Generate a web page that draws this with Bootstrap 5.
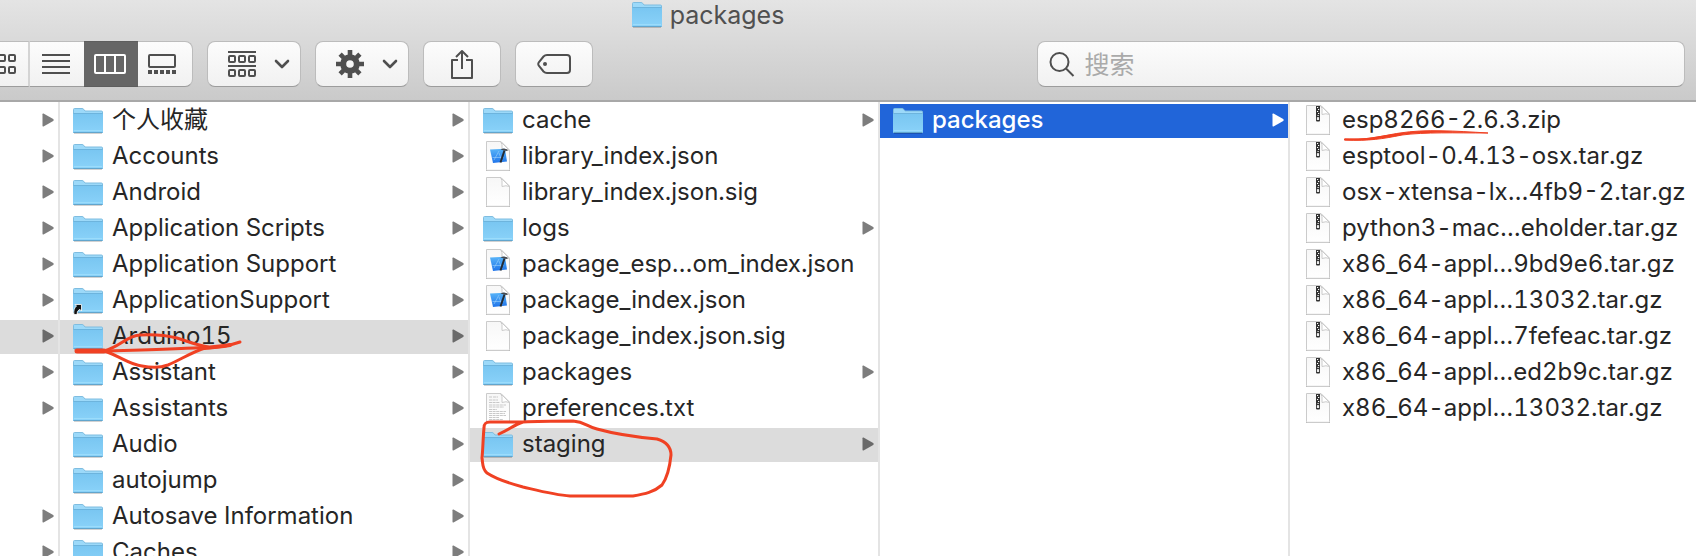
<!DOCTYPE html>
<html lang="zh-CN">
<head>
<meta charset="utf-8">
<meta name="viewport" content="width=device-width, initial-scale=1">
<title>packages</title>
<link href="https://cdn.jsdelivr.net/npm/bootstrap@5.3.0/dist/css/bootstrap.min.css" rel="stylesheet">
<style>
body{font-family:Inter,"Noto Sans CJK SC",sans-serif;font-size:24px;line-height:34px;color:#262626;background:#fff;font-variant-numeric:tabular-nums}
.finder{height:100vh}
.topbar{background:linear-gradient(#e4e4e4,#cacaca);border-bottom:2px solid #a8a8a8}
.title{height:28px;line-height:30px;font-size:25px;color:#505050;padding-right:280px;margin-bottom:13px}
.tools{gap:14px;padding:0 11px 13px 0}
.tool,.seg,.search{background:linear-gradient(#fcfcfc,#f1f1f1);border:1px solid #bcbcbc;border-bottom-color:#9c9c9c;height:46px;color:#4f4f4f}
.tool{border-radius:8px;width:78px;padding:0}
.tool.wide{width:94px;gap:18px;padding-left:10px}
.seg{border-width:1px 0;border-radius:0;width:54px;padding:0 2px 0 0}
.seg.first{width:30px;border-right:2px solid #d4d4d4}
.seg.last{border-right-width:1px;border-radius:0 8px 8px 0;width:55px;padding-right:6px}
.seg.active{background:#666;border-color:#5e5e5e;color:#fff}
.search{border-radius:8px;flex:0 0 calc(50% - 194px);padding-left:11px;gap:10px}
.search input{font-size:25px;height:40px;padding:2px 0 0;outline:0;min-width:0}
.search input::placeholder{color:#aaa;opacity:1}
.columns{display:grid;grid-template-columns:60px repeat(3,minmax(0,410fr)) minmax(0,406fr);min-height:0}
.pane{border-right:2px solid #e4e4e4;padding:2px 0 0;margin:0;min-width:0}
.pane:last-child{border-right:0}
.entry{height:34px;margin-bottom:2px;padding:0 4px 2px 13px;gap:9px;color:inherit;text-decoration:none;white-space:nowrap}
.entry .arrow{margin-left:auto;color:#7d7d7d}
.entry.trail{background:#dcdcdc}
.entry.trail .arrow{color:#6a6a6a}
.entry.picked{background:#2165d9;color:#fff;font-weight:500}
.entry.picked .arrow{color:#fff}
.ink{position:absolute;left:0;top:0;overflow:visible;pointer-events:none;z-index:2;fill:none;stroke:#f04123;stroke-width:4;stroke-linecap:round;stroke-linejoin:round}
svg{flex:none}
</style>
</head>
<body>
<svg class="position-absolute" width="0" height="0" aria-hidden="true">
<defs>
<linearGradient id="blue" x1="0" y1="0" x2="0" y2="1"><stop offset="0" stop-color="#79c6f1"/><stop offset="1" stop-color="#8ad2f9"/></linearGradient>
<linearGradient id="paper" x1="0" y1="0" x2="0" y2="1"><stop offset="0" stop-color="#f7f7f7"/><stop offset="1" stop-color="#fff"/></linearGradient>
<linearGradient id="xc" x1="0" y1="0" x2="0" y2="1"><stop offset="0" stop-color="#58b4f8"/><stop offset="1" stop-color="#1f74ea"/></linearGradient>
</defs>
<symbol id="folder" viewBox="0 0 30 30"><path d="M1 28.5h28" stroke="#000" stroke-opacity=".18"/><path d="M.5 8V4.500q0-1 1-1H9q1 0 1.700.8L12 6h16.500q1 0 1 1v20.500H.5z" fill="#9cd9f9" stroke="#7fbde0"/><path d="M0 8.500h30v18.700q0 .8-.8.800H.800q-.8 0-.8-.8z" fill="url(#blue)"/><path d="M.5 8.500h29" stroke="#6db4dd"/><path d="M.5 27.500h29" stroke="#62a5cc"/><path d="M1 25.500h28" stroke="#9bdcfb"/></symbol>
<symbol id="page" viewBox="0 0 30 30"><path d="M3 29.500h24" stroke="#000" stroke-opacity=".28"/><path d="M3.500.5h14.500L26.500 9v19.500q0 .8-.8.800H4.300q-.8 0-.8-.8z" fill="url(#paper)" stroke="#cbcbcb"/><path d="M17.500.5l1.500 3v6q4-1.500 7.500 0z" fill="#fff" stroke="#cbcbcb" stroke-linejoin="round"/></symbol>
<symbol id="json" viewBox="0 0 30 30"><use href="#page"/><path d="M7 8.500l15-.7L24 20.500l-14 1.500z" fill="url(#xc)"/><path d="M11 19l5-9M16 12l3 8M9.500 16.500h11" stroke="#9bd0fb" stroke-opacity=".6" fill="none"/><path d="M21.500 9.500L17.500 21.500" stroke="#252a31" stroke-width="2"/><path d="M17.500 8.700q3-2 5.500-.7l1.500.5v1.500l-2.500-.2-1.500-.6z" fill="#45494f"/></symbol>
<symbol id="zip" viewBox="0 0 30 30"><use href="#page"/><path d="M13 1h4v14.500q0 1-1 1h-2q-1 0-1-1z" fill="#333"/><path d="M14 2.500h1.200M15 4.500h1.200M14 6.500h1.200M15 8.500h1.200M14.500 10.500h1.200M14.400 15v-2.500h1.200V15" stroke="#fff" stroke-width="1" fill="none"/></symbol>
<symbol id="txt" viewBox="0 0 30 30"><use href="#page"/><path d="M6 4h3m1 0h5M6 7h9M6 9.500h11M6 12h17M6 14h15M6 16.500h8M6 18.500h17M6 20.500h16M6 22.500h17M6 24.500h10M6 26.500h14" stroke="#bbb" stroke-width=".8" stroke-dasharray="3 .6"/></symbol>
<symbol id="alias" viewBox="0 0 30 30"><use href="#folder"/><path d="M1 29.500q-1-5.500 2.500-8.500l-1.500-1.500h6.500v6.500l-1.800-1.800q-3 1.800-2.700 5.300z" fill="#111" stroke="#fff" stroke-width=".8"/></symbol>
<symbol id="tri" viewBox="0 0 12 14"><path d="M.5 1.200Q.5.200 1.500.6l9.700 5.500q1 .9 0 1.800L1.500 13.400q-1 .4-1-.6z" fill="currentColor"/></symbol>
<symbol id="chev" viewBox="0 0 16 10"><path d="M2 2l6 6 6-6" fill="none" stroke="currentColor" stroke-width="2.600" stroke-linecap="round" stroke-linejoin="round"/></symbol>
</svg>

<div class="finder d-flex flex-column overflow-hidden">
<header class="topbar">
<div class="title d-flex justify-content-center gap-2"><svg width="30" height="28"><use href="#folder" y="-1" width="30" height="30"/></svg><span>packages</span></div>
<div class="tools d-flex">
<div class="d-flex" role="group" aria-label="View">
<button class="btn seg first d-flex align-items-center" aria-label="Icons"><svg width="16" height="20" fill="none" stroke="currentColor" stroke-width="2"><rect x="-1" y="1" width="6" height="6" rx="1"/><rect x="9" y="1" width="6" height="6" rx="1"/><rect x="-1" y="13" width="6" height="6" rx="1"/><rect x="9" y="13" width="6" height="6" rx="1"/></svg></button>
<button class="btn seg d-flex align-items-center justify-content-center" aria-label="List"><svg width="28" height="20" stroke="currentColor" stroke-width="2"><path d="M0 1h28M0 7h28M0 13h28M0 19h28"/></svg></button>
<button class="btn seg active d-flex align-items-center justify-content-center" aria-label="Columns"><svg width="32" height="20" fill="none" stroke="currentColor" stroke-width="2"><rect x="1" y="1" width="30" height="18" rx="1"/><path d="M11 1v18M21 1v18"/></svg></button>
<button class="btn seg last d-flex align-items-center justify-content-center" aria-label="Gallery"><svg width="28" height="20" fill="none" stroke="currentColor" stroke-width="2"><rect x="1" y="1" width="26" height="12" rx="1"/><path d="M0 18h28" stroke-width="4" stroke-dasharray="4 2"/></svg></button>
</div>
<button class="btn tool wide d-flex align-items-center justify-content-center" aria-label="Group"><svg width="28" height="26" fill="none" stroke="currentColor" stroke-width="2"><path d="M0 1h28M0 15h28"/><rect x="1" y="5" width="6" height="6" rx="1"/><rect x="11" y="5" width="6" height="6" rx="1"/><rect x="21" y="5" width="6" height="6" rx="1"/><rect x="1" y="19" width="6" height="6" rx="1"/><rect x="11" y="19" width="6" height="6" rx="1"/><rect x="21" y="19" width="6" height="6" rx="1"/></svg><svg width="16" height="10"><use href="#chev"/></svg></button>
<button class="btn tool wide d-flex align-items-center justify-content-center" aria-label="Action"><svg width="28" height="28" viewBox="-14 -14 28 28" fill="none" stroke="currentColor"><circle r="6.800" stroke-width="6"/><path d="M0-14v5M0 9v5M-14 0h5M9 0h5M-9.900-9.900l3.500 3.500M9.900 9.900l-3.500-3.500M-9.900 9.900l3.500-3.500M9.900-9.900l-3.500 3.500" stroke-width="4.600"/></svg><svg width="16" height="10"><use href="#chev"/></svg></button>
<button class="btn tool d-flex align-items-center justify-content-center" aria-label="Share"><svg width="22" height="32" fill="none" stroke="currentColor" stroke-width="2"><path d="M7 12H1v18h20V12h-6M11 21V3M5 9l6-6 6 6" stroke-linejoin="round"/></svg></button>
<button class="btn tool d-flex align-items-center justify-content-center" aria-label="Tags"><svg width="34" height="20" fill="none" stroke="currentColor" stroke-width="2"><path d="M10 1h20q3 0 3 3v12q0 3-3 3H10q-2 0-3.500-1.500L2 12q-1.500-2 0-4l4.500-5.500Q8 1 10 1z"/><circle cx="8" cy="10" r="2" fill="currentColor" stroke="none"/></svg></button>
<label class="search d-flex align-items-center ms-auto"><svg width="26" height="26" fill="none" stroke="currentColor" stroke-width="2"><circle cx="10.500" cy="11" r="9"/><path d="M17 17.500L24.500 25"/></svg><input class="border-0 bg-transparent w-100" type="text" placeholder="搜索" aria-label="搜索"></label>
</div>
</header>

<main class="columns flex-grow-1">
<ul class="pane list-unstyled">
<li><a class="entry d-flex align-items-center" href="#" aria-label="Folder"><svg class="arrow" width="12" height="14"><use href="#tri"/></svg></a></li>
<li><a class="entry d-flex align-items-center" href="#" aria-label="Folder"><svg class="arrow" width="12" height="14"><use href="#tri"/></svg></a></li>
<li><a class="entry d-flex align-items-center" href="#" aria-label="Folder"><svg class="arrow" width="12" height="14"><use href="#tri"/></svg></a></li>
<li><a class="entry d-flex align-items-center" href="#" aria-label="Folder"><svg class="arrow" width="12" height="14"><use href="#tri"/></svg></a></li>
<li><a class="entry d-flex align-items-center" href="#" aria-label="Folder"><svg class="arrow" width="12" height="14"><use href="#tri"/></svg></a></li>
<li><a class="entry d-flex align-items-center" href="#" aria-label="Folder"><svg class="arrow" width="12" height="14"><use href="#tri"/></svg></a></li>
<li><a class="entry trail d-flex align-items-center" href="#" aria-label="Library"><svg class="arrow" width="12" height="14"><use href="#tri"/></svg></a></li>
<li><a class="entry d-flex align-items-center" href="#" aria-label="Folder"><svg class="arrow" width="12" height="14"><use href="#tri"/></svg></a></li>
<li><a class="entry d-flex align-items-center" href="#" aria-label="Folder"><svg class="arrow" width="12" height="14"><use href="#tri"/></svg></a></li>
<li><a class="entry d-flex" href="#" aria-label="File"></a></li>
<li><a class="entry d-flex" href="#" aria-label="File"></a></li>
<li><a class="entry d-flex align-items-center" href="#" aria-label="Folder"><svg class="arrow" width="12" height="14"><use href="#tri"/></svg></a></li>
<li><a class="entry d-flex align-items-center" href="#" aria-label="Folder"><svg class="arrow" width="12" height="14"><use href="#tri"/></svg></a></li>
</ul>

<ul class="pane list-unstyled">
<li><a class="entry d-flex align-items-center" href="#"><svg width="30" height="30"><use href="#folder"/></svg>个人收藏<svg class="arrow" width="12" height="14"><use href="#tri"/></svg></a></li>
<li><a class="entry d-flex align-items-center" href="#"><svg width="30" height="30"><use href="#folder"/></svg>Accounts<svg class="arrow" width="12" height="14"><use href="#tri"/></svg></a></li>
<li><a class="entry d-flex align-items-center" href="#"><svg width="30" height="30"><use href="#folder"/></svg>Android<svg class="arrow" width="12" height="14"><use href="#tri"/></svg></a></li>
<li><a class="entry d-flex align-items-center" href="#"><svg width="30" height="30"><use href="#folder"/></svg>Application Scripts<svg class="arrow" width="12" height="14"><use href="#tri"/></svg></a></li>
<li><a class="entry d-flex align-items-center" href="#"><svg width="30" height="30"><use href="#folder"/></svg>Application Support<svg class="arrow" width="12" height="14"><use href="#tri"/></svg></a></li>
<li><a class="entry d-flex align-items-center" href="#"><svg width="30" height="30"><use href="#alias"/></svg>ApplicationSupport<svg class="arrow" width="12" height="14"><use href="#tri"/></svg></a></li>
<li><a class="entry trail position-relative d-flex align-items-center" href="#"><svg width="30" height="30"><use href="#folder"/></svg>Arduino15<svg class="arrow" width="12" height="14"><use href="#tri"/></svg>
<svg class="ink" width="200" height="60"><path d="M17 31H44" stroke-width="5"/><path d="M40 31C80 30 130 29 145 27M145 28Q160 27 170 25L180 22" stroke-width="3"/><path d="M142 28Q158 27 170 25" stroke-width="4"/><path d="M44 31C60 27 68 15 80 15C95 14 105 15 117 18C127 21 136 25 148 27M44 31C60 36 70 45 82 46C92 48 100 48 108 45C120 40 132 32 145 28" stroke-width="3"/></svg></a></li>
<li><a class="entry d-flex align-items-center" href="#"><svg width="30" height="30"><use href="#folder"/></svg>Assistant<svg class="arrow" width="12" height="14"><use href="#tri"/></svg></a></li>
<li><a class="entry d-flex align-items-center" href="#"><svg width="30" height="30"><use href="#folder"/></svg>Assistants<svg class="arrow" width="12" height="14"><use href="#tri"/></svg></a></li>
<li><a class="entry d-flex align-items-center" href="#"><svg width="30" height="30"><use href="#folder"/></svg>Audio<svg class="arrow" width="12" height="14"><use href="#tri"/></svg></a></li>
<li><a class="entry d-flex align-items-center" href="#"><svg width="30" height="30"><use href="#folder"/></svg>autojump<svg class="arrow" width="12" height="14"><use href="#tri"/></svg></a></li>
<li><a class="entry d-flex align-items-center" href="#"><svg width="30" height="30"><use href="#folder"/></svg>Autosave Information<svg class="arrow" width="12" height="14"><use href="#tri"/></svg></a></li>
<li><a class="entry d-flex align-items-center" href="#"><svg width="30" height="30"><use href="#folder"/></svg>Caches<svg class="arrow" width="12" height="14"><use href="#tri"/></svg></a></li>
</ul>

<ul class="pane list-unstyled">
<li><a class="entry d-flex align-items-center" href="#"><svg width="30" height="30"><use href="#folder"/></svg>cache<svg class="arrow" width="12" height="14"><use href="#tri"/></svg></a></li>
<li><a class="entry d-flex align-items-center" href="#"><svg width="30" height="30"><use href="#json"/></svg>library_index.json</a></li>
<li><a class="entry d-flex align-items-center" href="#"><svg width="30" height="30"><use href="#page"/></svg>library_index.json.sig</a></li>
<li><a class="entry d-flex align-items-center" href="#"><svg width="30" height="30"><use href="#folder"/></svg>logs<svg class="arrow" width="12" height="14"><use href="#tri"/></svg></a></li>
<li><a class="entry d-flex align-items-center" href="#"><svg width="30" height="30"><use href="#json"/></svg>package_esp…om_index.json</a></li>
<li><a class="entry d-flex align-items-center" href="#"><svg width="30" height="30"><use href="#json"/></svg>package_index.json</a></li>
<li><a class="entry d-flex align-items-center" href="#"><svg width="30" height="30"><use href="#page"/></svg>package_index.json.sig</a></li>
<li><a class="entry d-flex align-items-center" href="#"><svg width="30" height="30"><use href="#folder"/></svg>packages<svg class="arrow" width="12" height="14"><use href="#tri"/></svg></a></li>
<li><a class="entry d-flex align-items-center" href="#"><svg width="30" height="30"><use href="#txt"/></svg>preferences.txt</a></li>
<li><a class="entry trail position-relative d-flex align-items-center" href="#"><svg width="30" height="30"><use href="#folder"/></svg>staging<svg class="arrow" width="12" height="14"><use href="#tri"/></svg>
<svg class="ink" width="210" height="80"><path stroke-width="3" d="M29 6C40 1 44-3 53-6C70-7 88-7 103-7C115-6 116-2 127 1C145 6 165 9 187 11C197 14 201 19 201 27C200 37 197 50 192 57C184 64 175 66 163 68H100C85 67 70 63 53 59C38 55 26 51 17 45C12 41 13 36 12 30C13 20 13 10 14 0C14-4 15-6 20-6H53"/></svg></a></li>
</ul>

<ul class="pane list-unstyled">
<li><a class="entry picked d-flex align-items-center" href="#"><svg width="30" height="30"><use href="#folder"/></svg>packages<svg class="arrow" width="12" height="14"><use href="#tri"/></svg></a></li>
</ul>

<ul class="pane list-unstyled">
<li><a class="entry position-relative d-flex align-items-center" href="#"><svg width="30" height="30"><use href="#zip"/></svg>esp8266-2.6.3.zip
<svg class="ink" width="210" height="40"><path d="M55 35C82 36 90 32 110 29C135 25 165 27 198 29C165 29 135 28 112 31C92 35 80 37 55 36z" fill="#f04123" stroke-width="1"/><path d="M55 35.500Q72 36 84 34T112 30" stroke-width="2"/></svg></a></li>
<li><a class="entry d-flex align-items-center" href="#"><svg width="30" height="30"><use href="#zip"/></svg>esptool-0.4.13-osx.tar.gz</a></li>
<li><a class="entry d-flex align-items-center" href="#"><svg width="30" height="30"><use href="#zip"/></svg>osx-xtensa-lx…4fb9-2.tar.gz</a></li>
<li><a class="entry d-flex align-items-center" href="#"><svg width="30" height="30"><use href="#zip"/></svg>python3-mac…eholder.tar.gz</a></li>
<li><a class="entry d-flex align-items-center" href="#"><svg width="30" height="30"><use href="#zip"/></svg>x86_64-appl…9bd9e6.tar.gz</a></li>
<li><a class="entry d-flex align-items-center" href="#"><svg width="30" height="30"><use href="#zip"/></svg>x86_64-appl…13032.tar.gz</a></li>
<li><a class="entry d-flex align-items-center" href="#"><svg width="30" height="30"><use href="#zip"/></svg>x86_64-appl…7fefeac.tar.gz</a></li>
<li><a class="entry d-flex align-items-center" href="#"><svg width="30" height="30"><use href="#zip"/></svg>x86_64-appl…ed2b9c.tar.gz</a></li>
<li><a class="entry d-flex align-items-center" href="#"><svg width="30" height="30"><use href="#zip"/></svg>x86_64-appl…13032.tar.gz</a></li>
</ul>
</main>
</div>
<script src="https://cdn.jsdelivr.net/npm/bootstrap@5.3.0/dist/js/bootstrap.bundle.min.js"></script>
</body>
</html>
